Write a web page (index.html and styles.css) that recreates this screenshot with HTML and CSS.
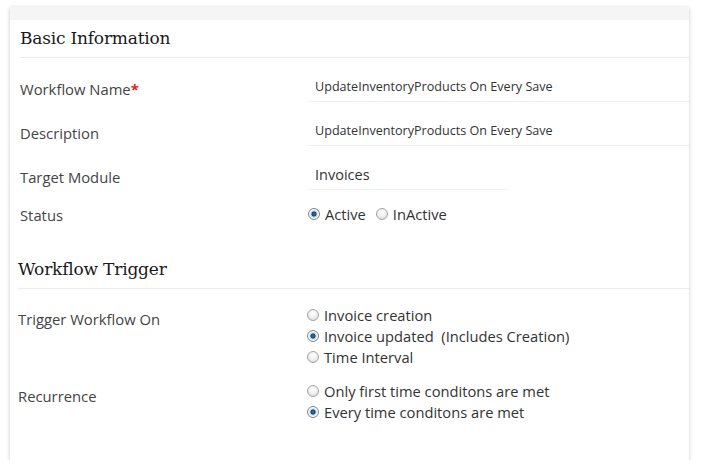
FILE: index.html
```html
<!DOCTYPE html>
<html>
<head>
<meta charset="utf-8">
<link rel="stylesheet" href="styles.css">
</head>
<body>
<div class="card">
  <div class="card-top"></div>
  <section class="section basic">
    <h2 class="heading">Basic Information</h2>
    <div class="row">
      <div class="label">Workflow Name<span class="req">*</span></div>
      <div class="value"><div class="input">UpdateInventoryProducts On Every Save</div></div>
    </div>
    <div class="row">
      <div class="label">Description</div>
      <div class="value"><div class="input">UpdateInventoryProducts On Every Save</div></div>
    </div>
    <div class="row">
      <div class="label">Target Module</div>
      <div class="value"><div class="input select">Invoices</div></div>
    </div>
    <div class="row status">
      <div class="label">Status</div>
      <div class="value inline">
        <label class="opt"><span class="radio checked"></span>Active</label>
        <label class="opt"><span class="radio"></span>InActive</label>
      </div>
    </div>
  </section>
  <section class="section trigger">
    <h2 class="heading">Workflow Trigger</h2>
    <div class="row list">
      <div class="label">Trigger Workflow On</div>
      <div class="value stack">
        <label class="opt"><span class="radio"></span>Invoice creation</label>
        <label class="opt"><span class="radio checked"></span>Invoice updated&nbsp; (Includes Creation)</label>
        <label class="opt"><span class="radio"></span>Time Interval</label>
      </div>
    </div>
    <div class="row list second">
      <div class="label">Recurrence</div>
      <div class="value stack">
        <label class="opt"><span class="radio"></span>Only first time conditons are met</label>
        <label class="opt"><span class="radio checked"></span>Every time conditons are met</label>
      </div>
    </div>
  </section>
</div>
</body>
</html>
```

FILE: styles.css
```css
* { box-sizing: border-box; }
html, body { margin: 0; padding: 0; background: #ffffff; }
body {
  font-family: "Open Sans", "DejaVu Sans", sans-serif;
  color: #3a3a3a;
}
.card {
  margin: 7px 0 0 10px;
  width: 679px;
  height: 453px;
  background: #fff;
  box-shadow: 0 1px 4px rgba(0,0,0,0.22);
}
.card-top {
  height: 13px;
  background: #f5f5f5;
}
.section { padding: 0 0 0 10px; }
.section.trigger { padding-left: 8px; margin-top: 27px; }
.heading {
  margin: 0;
  height: 38px;
  line-height: 37px;
  font-family: "DejaVu Serif", serif;
  font-weight: normal;
  font-size: 17px;
  letter-spacing: -0.2px;
  color: #1a1a1a;
  border-bottom: 1px solid #ececec;
}
.row {
  display: grid;
  grid-template-columns: 288px 1fr;
  padding-top: 14px;
}
.trigger .row { grid-template-columns: 290px 1fr; }
.label {
  font-size: 14.8px;
  color: #444;
  height: 30px;
  line-height: 30px;
  padding-top: 2px;
}
.req { color: #e0201c; font-weight: bold; }
.input {
  height: 30px;
  line-height: 29px;
  font-size: 12.6px;
  padding-left: 7px;
  color: #333;
  border-bottom: 1px solid #efefef;
}
.input.select { width: 200px; font-size: 14.5px; }
.status .label { height: 20px; line-height: 20px; padding-top: 1px; }
.inline { display: flex; align-items: center; height: 20px; gap: 10px; }
.opt {
  display: flex;
  align-items: center;
  font-size: 14.7px;
  color: #333;
  height: 21px;
  white-space: pre;
}
.radio {
  display: inline-block;
  width: 12px;
  height: 12px;
  border-radius: 50%;
  border: 1px solid #a4a4a4;
  background: radial-gradient(circle at 50% 35%, #ffffff 0%, #ededed 55%, #cfcfcf 100%);
  margin-right: 5px;
  flex: none;
}
.radio.checked {
  border-color: #7b8793;
  background: radial-gradient(circle at 50% 50%, #2a76b8 0%, #134a7c 30%, #c9d3dc 42%, #ffffff 62%, #cfd6dc 100%);
}
.list { padding-top: 15px; }
.list .label { height: auto; line-height: 21px; padding-top: 5px; }
.list.second { padding-top: 13px; }
.list.second .label { padding-top: 6px; }
.stack { display: flex; flex-direction: column; }
.trigger .opt { margin-left: -1px; }
```
